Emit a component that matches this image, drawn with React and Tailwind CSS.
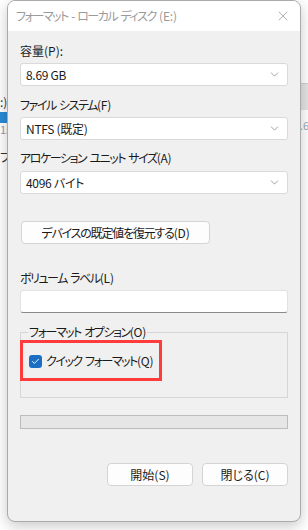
import { ChevronDown, X, Check } from "lucide-react";

const font = {
  fontFamily: '"Noto Sans CJK JP", "Noto Sans", sans-serif',
};

// kana part squeezed to the width of Yu Gothic UI, latin suffix left alone
function Jp({ text, suffix }) {
  return (
    <>
      <span className="tracking-[-1.45px] [word-spacing:2px]">{text}</span>
      <span className="tracking-[-0.2px]">{suffix}</span>
    </>
  );
}

function Combo({ value, className = "" }) {
  return (
    <div
      className={`flex items-center justify-between h-[23px] px-[5px] bg-white border border-[#d9d9d9] rounded-[3px] text-[12px] text-[#1a1a1a] ${className}`}
    >
      <span className="leading-none tracking-[-0.3px]">{value}</span>
      <ChevronDown size={13} strokeWidth={1.3} className="text-[#7a7a7a] mr-[1px]" />
    </div>
  );
}

function Label({ children, className = "" }) {
  return (
    <div className={`text-[12px] leading-[16px] text-[#1a1a1a] ${className}`}>{children}</div>
  );
}

function Btn({ children, className = "" }) {
  return (
    <button
      className={`h-[23px] bg-[#fdfdfd] border border-[#d4d4d4] rounded-[4px] text-[12px] text-[#1a1a1a] leading-none ${className}`}
    >
      {children}
    </button>
  );
}

export default function App() {
  return (
    <div
      className="relative w-[308px] h-[530px] bg-white overflow-hidden [font-feature-settings:'palt']"
      style={font}
    >
      {/* window behind the dialog */}
      <div className="absolute left-0 top-[96px] text-[12px] leading-none text-[#333]">:)</div>
      <div className="absolute left-0 top-[112px] w-[8px] h-[11px] bg-[#2a8bd6]" />
      <div className="absolute left-0 top-[124px] text-[11px] leading-none text-[#8ca0b4]">15</div>
      <div className="absolute left-0 top-[151px] text-[12px] leading-none text-[#333]">ブ</div>
      <div className="absolute right-0 top-[83px] w-[10px] h-[27px] bg-[#e4e4e4] border-t border-[#d0d0d0]" />
      <div className="absolute left-[300px] top-[120px] text-[11px] leading-none text-[#9aa8b6]">.6</div>

      {/* dialog */}
      <div className="relative ml-[7px] w-[294px] h-[522px] flex flex-col bg-[#f0f0f0] border border-[#aaaaaa] rounded-[8px] shadow-[0_4px_14px_rgba(0,0,0,0.22)] overflow-hidden">
        <div className="flex items-center justify-between h-[30px] bg-white pl-[8px] pr-[9px] shrink-0">
          <span className="text-[12px] text-[#9a9a9a] leading-none">
            <Jp text="フォーマット - ローカル ディスク " suffix="(E:)" />
          </span>
          <X size={16} strokeWidth={1} className="text-[#8a8a8a]" />
        </div>

        <div className="flex flex-col px-[12px]">
          <Label className="mt-[12px]">容量(P):</Label>
          <Combo value="8.69 GB" className="mt-[4px]" />

          <Label className="mt-[11px]">
            <Jp text="ファイル システム" suffix="(F)" />
          </Label>
          <Combo value="NTFS (既定)" className="mt-[4px]" />

          <Label className="mt-[10px]">
            <Jp text="アロケーション ユニット サイズ" suffix="(A)" />
          </Label>
          <Combo value="4096 バイト" className="mt-[5px]" />

          <Btn className="mt-[27px] w-[189px] self-start ml-[1px]">
            <span className="tracking-[-1.2px]">デバイスの既定値を復元する</span>
            <span className="tracking-[-0.2px]">(D)</span>
          </Btn>

          <Label className="mt-[26px]">
            <Jp text="ボリューム ラベル" suffix="(L)" />
          </Label>
          <div className="mt-[4px] h-[23px] bg-white border border-[#e2e2e2] border-b-[#8a8a8a] rounded-[3px]" />

          <div className="relative mt-[19px] h-[66px] border border-[#d6d6d6]">
            <span className="absolute left-[7px] top-[-9px] px-[1px] bg-[#f0f0f0] text-[12px] leading-[16px] text-[#1a1a1a]">
              <Jp text="フォーマット オプション" suffix="(O)" />
            </span>
            <div className="absolute left-[-1px] top-[7px] w-[142px] h-[41px] border-[3px] border-[#ff3b3b]" />
            <div className="flex items-center mt-[20px] ml-[8px] gap-[4px]">
              <span className="flex items-center justify-center w-[13px] h-[13px] rounded-[3px] bg-[#1a6fc4]">
                <Check size={9} strokeWidth={2.5} className="text-white" />
              </span>
              <span className="text-[12px] leading-[16px] text-[#1a1a1a]">
                <Jp text="クイック フォーマット" suffix="(Q)" />
              </span>
            </div>
          </div>

          <div className="mt-[17px] h-[14px] bg-[#e6e6e6] border border-[#bcbcbc]" />

          <div className="flex justify-end gap-[9px] mt-[34px]">
            <Btn className="w-[86px]">開始(S)</Btn>
            <Btn className="w-[86px]">閉じる(C)</Btn>
          </div>
        </div>
      </div>
    </div>
  );
}
